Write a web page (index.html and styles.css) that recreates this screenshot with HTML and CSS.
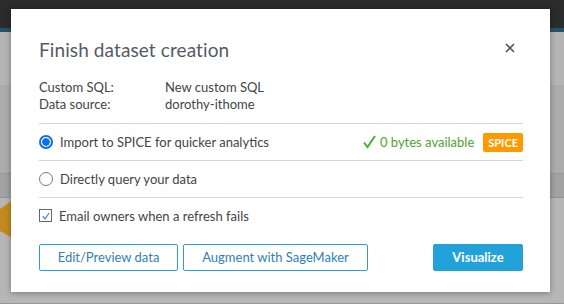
FILE: index.html
```html
<!DOCTYPE html>
<html lang="en">
<head>
    <meta charset="UTF-8">
    <title>Finish dataset creation</title>
    <link rel="stylesheet" href="styles.css">
</head>
<body>
    <!-- dimmed page behind the dialog -->
    <div class="page">
        <div class="topbar"></div>
        <div class="strip"></div>
        <div class="band band-light"></div>
        <div class="band"></div>
        <div class="band band-low"></div>
        <div class="band band-dark"></div>
        <div class="band band-foot"></div>
        <div class="shape"></div>
    </div>

    <div class="dialog">
        <div class="dialog-head">
            <h1>Finish dataset creation</h1>
            <a href="javascript:;" class="close">
                <svg width="10" height="10" viewBox="0 0 10 10"><path d="M1 1 L9 9 M9 1 L1 9" stroke="#545b64" stroke-width="1.6" fill="none"/></svg>
            </a>
        </div>
        <dl class="meta">
            <dt>Custom SQL:</dt><dd>New custom SQL</dd>
            <dt>Data source:</dt><dd>dorothy-ithome</dd>
        </dl>
        <div class="option">
            <span class="radio checked"></span>
            <span class="label">Import to SPICE for quicker analytics</span>
            <span class="avail">
                <svg width="13" height="14" viewBox="0 0 13 14"><path d="M1 7.5 L4.5 12 L12 1" stroke="#4cb02b" stroke-width="2" fill="none"/></svg>
                0 bytes available
            </span>
            <span class="badge">SPICE</span>
        </div>
        <div class="option">
            <span class="radio"></span>
            <span class="label">Directly query your data</span>
        </div>
        <div class="option option-last">
            <span class="check">
                <svg width="8" height="8" viewBox="0 0 8 8"><path d="M0.8 4.2 L3 6.8 L7.2 1" stroke="#2b7fd0" stroke-width="1.1" fill="none"/></svg>
            </span>
            <span class="label">Email owners when a refresh fails</span>
        </div>
        <div class="actions">
            <a href="javascript:;" class="btn btn-edit">Edit/Preview data</a>
            <a href="javascript:;" class="btn btn-aug">Augment with SageMaker</a>
            <a href="javascript:;" class="btn btn-primary">Visualize</a>
        </div>
    </div>
</body>
</html>
```

FILE: styles.css
```css
*{
    padding: 0;
    margin: 0;
    box-sizing: border-box;
}
body{
    width: 564px;
    height: 304px;
    overflow: hidden;
    font-family: Lato, "Liberation Sans", sans-serif;
    color: #333;
}
.page{
    position: relative;
    display: flex;
    flex-direction: column;
    height: 304px;
    background-color: #ababab;
}
.topbar{
    height: 28px;
    background-color: #2b2b2b;
}
.strip{
    height: 4px;
    background-color: #22556b;
}
.band{
    height: 89px;
    background-color: #acacac;
    border-bottom: 1px solid #969696;
}
.band-light{
    height: 53px;
    border-bottom: none;
    background-color: #b4b4b4;
}
.band-low{
    height: 0;
    border: none;
}
.band-dark{
    height: 24px;
    background-color: #a2a2a2;
    border-bottom: 1px solid #939393;
}
.band-foot{
    flex: 1;
    background-color: #b6b6b6;
}
.shape{
    position: absolute;
    left: 0;
    top: 199px;
    width: 14px;
    height: 40px;
    background-color: #c38b1f;
    clip-path: polygon(0 25%, 100% 0, 100% 100%, 0 80%);
}
.dialog{
    position: absolute;
    left: 11px;
    top: 9px;
    width: 539px;
    height: 283px;
    padding: 28px 27px 0 28px;
    background-color: #fff;
    box-shadow: 0 1px 6px rgba(0,0,0,0.35);
}
.dialog-head{
    display: flex;
    justify-content: space-between;
    align-items: center;
    height: 24px;
}
.dialog-head h1{
    font-size: 19px;
    font-weight: normal;
    color: #545b64;
    letter-spacing: 0.1px;
}
.close{
    display: flex;
    margin-right: 8px;
    margin-top: -3px;
}
.meta{
    display: grid;
    grid-template-columns: 126px 1fr;
    margin-top: 18px;
    font-size: 13px;
    line-height: 17px;
    color: #444;
}
.option{
    display: flex;
    align-items: center;
    height: 37px;
    margin-top: 10px;
    border-top: 1px solid #d5d5d5;
    font-size: 13px;
    color: #444;
}
.option + .option{
    margin-top: 0;
}
.option-last{
    height: 36px;
}
.option .label{
    flex: 1;
}
.radio{
    width: 14px;
    height: 14px;
    margin: 0 7px 0 0;
    border: 1px solid #777;
    border-radius: 50%;
}
.radio.checked{
    border: 2px solid #0a6ff2;
    background: radial-gradient(circle, #0a6ff2 0, #0a6ff2 3.5px, #fff 4px);
}
.check{
    display: flex;
    align-items: center;
    justify-content: center;
    width: 13px;
    height: 13px;
    margin: 0 7px 0 0;
    border: 1px solid #666;
}
.avail{
    display: flex;
    align-items: center;
    gap: 4px;
    color: #4aa52a;
}
.badge{
    margin-left: 9px;
    padding: 0 5px;
    height: 19px;
    line-height: 19px;
    background-color: #ff9900;
    color: #fff;
    font-size: 11px;
    font-weight: bold;
    border-radius: 2px;
}
.actions{
    display: flex;
    margin-top: 11px;
}
.btn{
    display: block;
    height: 27px;
    line-height: 25px;
    border: 1px solid #2a9fd6;
    border-radius: 2px;
    text-align: center;
    text-decoration: none;
    font-size: 13px;
    color: #2f7fb6;
}
.btn-edit{
    width: 139px;
}
.btn-aug{
    width: 185px;
    margin-left: 5px;
}
.btn-primary{
    width: 90px;
    margin-left: auto;
    background-color: #22a2db;
    color: #fff;
    font-weight: bold;
}
```
